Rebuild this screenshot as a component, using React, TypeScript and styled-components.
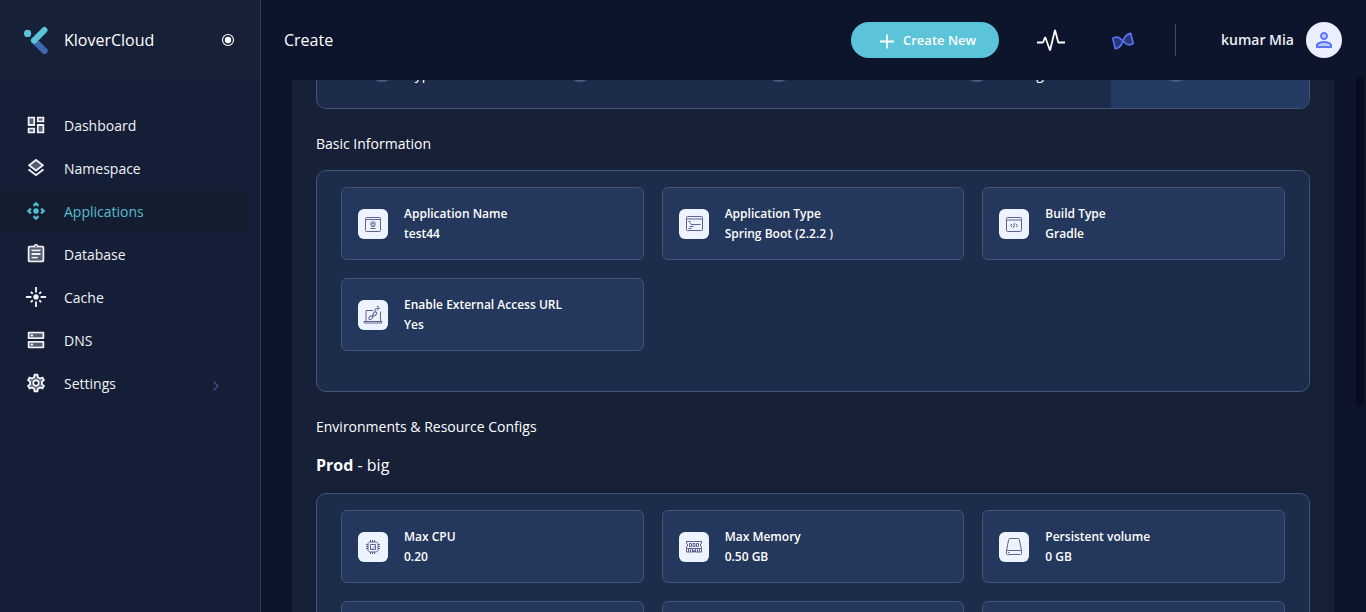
import React, { useLayoutEffect, useRef } from "react";
import styled, { createGlobalStyle } from "styled-components";
import { MdOutlineSettings, MdSettings } from "react-icons/md";
import { ChevronRight } from "lucide-react";

const GlobalStyle = createGlobalStyle`
  *, *::before, *::after { box-sizing: border-box; }
  body {
    margin: 0;
    background: #0d152d;
    color: #fff;
    font-family: "Open Sans", "Noto Sans", sans-serif;
    font-size: 14px;
    line-height: 20px;
  }
  button { font: inherit; color: inherit; border: 0; padding: 0; background: none; cursor: pointer; }
  a { color: inherit; text-decoration: none; }
  h1, h2, h3, ul, dl, dt, dd { margin: 0; padding: 0; font-weight: 400; }
  ul { list-style: none; }
  svg { display: block; flex: none; }
`;

const Shell = styled.div`
  display: grid;
  grid-template-columns: 261px minmax(0, 1fr);
  height: 100vh;
  overflow: hidden;
`;

const Sidebar = styled.aside`
  background: #141e37;
  border-right: 1px solid #2f3950;
`;

const Brand = styled.div`
  display: flex;
  align-items: center;
  gap: 16px;
  height: 80px;
  padding: 0 24px;
  background: #162037;
`;

const BrandName = styled.span`
  flex: 1;
  font-size: 16px;
  line-height: 24px;
`;

const PinButton = styled.button`
  display: grid;
  place-items: center;
  width: 16px;
  height: 16px;
`;

const Menu = styled.ul`
  padding: 24px 12px 0 0;
`;

const MenuLink = styled.a<{ $active?: boolean }>`
  display: flex;
  align-items: center;
  gap: 17px;
  height: 43px;
  padding: 0 24px 0 25px;
  color: ${(p) => (p.$active ? "#56bccf" : "#f1f2f5")};
  background: ${(p) => (p.$active ? "#141c2f" : "transparent")};
`;

const MenuIcon = styled.svg`
  margin-bottom: 1px;
`;

const MenuText = styled.span`
  flex: 1;
`;

const MenuArrow = styled(ChevronRight)`
  margin-top: 4px;
  color: #484f7c;
`;

const Main = styled.div`
  position: relative;
  display: flex;
  flex-direction: column;
  min-width: 0;
  min-height: 0;
`;

const TopBar = styled.header`
  display: flex;
  align-items: center;
  flex: none;
  height: 80px;
  padding: 0 24px 0 23px;
`;

const PageTitle = styled.h1`
  flex: 1;
  font-size: 16px;
  line-height: 24px;
`;

const CreateButton = styled.button`
  display: flex;
  align-items: center;
  gap: 8px;
  width: 148px;
  height: 36px;
  padding-left: 28px;
  border-radius: 18px;
  background: #5bc4d8;
  font-size: 13px;
  font-weight: 600;
  white-space: nowrap;
`;

const Tools = styled.div`
  display: flex;
  gap: 36px;
  margin: 0 34px;
`;

const IconButton = styled.button`
  display: grid;
  place-items: center;
  width: 36px;
  height: 36px;
`;

const Divider = styled.span`
  width: 1px;
  height: 32px;
  margin-right: 45px;
  background: #3d4963;
`;

const UserButton = styled.button`
  display: flex;
  align-items: center;
  gap: 12px;
  font-weight: 600;
  color: #eceef4;
`;

const Avatar = styled.span`
  display: grid;
  place-items: center;
  width: 36px;
  height: 36px;
  border-radius: 50%;
  background: #ebefff;
`;

const Scroller = styled.main`
  flex: 1;
  min-height: 0;
  overflow-y: auto;
  scrollbar-width: none;
  padding: 0 32px 0 31px;
`;

const ScrollThumb = styled.span`
  position: absolute;
  top: 76px;
  right: 2px;
  width: 8px;
  height: 331px;
  border-radius: 4px;
  background: #080d1d;
`;

const Sheet = styled.div`
  padding: 24px;
  background: #162037;
`;

const Stepper = styled.ul`
  display: grid;
  grid-template-columns: repeat(5, minmax(0, 1fr));
  border: 1px solid #435379;
  border-radius: 10px;
  overflow: hidden;
  background: #1c2c4a;
`;

const Step = styled.li<{ $active?: boolean }>`
  display: flex;
  align-items: flex-end;
  gap: 12px;
  padding: 24px 0 24px 52px;
  background: ${(p) => (p.$active ? "#243b64" : "transparent")};
`;

const StepDot = styled.span`
  width: 26px;
  height: 26px;
  margin-bottom: 2px;
  border-radius: 50%;
  background: #4a5a80;
`;

const SectionTitle = styled.h2`
  margin: 23px 0 14px;
  font-size: 14px;
  line-height: 24px;
`;

const EnvTitle = styled.h3`
  margin-bottom: 16px;
  font-size: 16px;
  line-height: 24px;
`;

const Panel = styled.section`
  padding: 16px 24px 40px;
  border: 1px solid #435379;
  border-radius: 10px;
  background: #1c2c4a;
`;

const CardGrid = styled.dl`
  display: grid;
  grid-template-columns: repeat(3, minmax(0, 1fr));
  gap: 18px;
`;

const Card = styled.div`
  display: flex;
  align-items: center;
  gap: 16px;
  height: 73px;
  padding: 0 16px;
  border: 1px solid #435379;
  border-radius: 6px;
  background: #24375d;
  font-size: 12px;
`;

const Tile = styled.span`
  display: grid;
  place-items: center;
  width: 30px;
  height: 30px;
  border-radius: 6px;
  background: #edf3ff;
`;

const CardLabel = styled.dt`
  font-weight: 600;
`;

const CardValue = styled.dd`
  font-weight: 600;
`;

type GlyphProps = { children: React.ReactNode };

const MenuGlyph = ({ children }: GlyphProps) => (
  <MenuIcon width="22" height="22" viewBox="0 0 24 24" fill="currentColor" aria-hidden="true">
    {children}
  </MenuIcon>
);

const CardGlyph = ({ children }: GlyphProps) => (
  <svg
    width="20"
    height="20"
    viewBox="0 0 20 20"
    fill="none"
    stroke="#5f6292"
    strokeWidth="1"
    strokeLinejoin="round"
    aria-hidden="true"
  >
    {children}
  </svg>
);

const Logo = () => (
  <svg width="24" height="28" viewBox="0 0 24 28" aria-hidden="true">
    <path d="M12 16.5 20.500 24.700" stroke="#4167b2" strokeWidth="6.400" strokeLinecap="round" />
    <path d="M10 14.500 20.400 4.100" stroke="#5bc4d8" strokeWidth="6.200" strokeLinecap="round" />
    <circle cx="3.600" cy="7.400" r="3.600" fill="#5bc4d8" />
  </svg>
);

const menu = [
  {
    label: "Dashboard",
    icon: (
      <MenuGlyph>
        <path d="M5 5h4v6H5zm10 8h4v6h-4zM5 17h4v2H5zM15 5h4v2h-4z" opacity=".3" />
        <path d="M3 13h8V3H3v10zm2-8h4v6H5V5zm8 16h8V11h-8v10zm2-8h4v6h-4v-6zM13 3v6h8V3h-8zm6 4h-4V5h4v2zM3 21h8v-6H3v6zm2-4h4v2H5v-2z" />
      </MenuGlyph>
    ),
  },
  {
    label: "Namespace",
    icon: (
      <MenuGlyph>
        <path d="M6.26 9L12 13.47 17.74 9 12 4.53z" opacity=".3" />
        <path d="M19.37 12.8l-7.38 5.74-7.37-5.73L3 14.07l9 7 9-7zM12 2L3 9l1.63 1.27L12 16l7.36-5.73L21 9l-9-7zm0 11.47L6.26 9 12 4.53 17.74 9 12 13.47z" />
      </MenuGlyph>
    ),
  },
  {
    label: "Applications",
    active: true,
    icon: (
      <MenuGlyph>
        <path d="M15.54 5.54L13.77 7.3 12 5.54 10.23 7.3 8.46 5.54 12 2zm2.92 10l-1.76-1.77L18.46 12l-1.76-1.77 1.76-1.77L22 12zm-10 2.92l1.77-1.76L12 18.46l1.77-1.76 1.77 1.76L12 22zm-2.92-10l1.76 1.77L5.54 12l1.76 1.77-1.76 1.77L2 12z" />
        <circle cx="12" cy="12" r="3" />
      </MenuGlyph>
    ),
  },
  {
    label: "Database",
    icon: (
      <MenuGlyph>
        <path d="M5 5v14h14V5H5zm9 12H7v-2h7v2zm3-4H7v-2h10v2zm0-4H7V7h10v2z" opacity=".3" />
        <path d="M7 15h7v2H7zm0-4h10v2H7zm0-4h10v2H7z" />
        <path d="M19 3h-4.18C14.4 1.84 13.3 1 12 1s-2.4.84-2.82 2H5c-1.1 0-2 .9-2 2v14c0 1.1.9 2 2 2h14c1.1 0 2-.9 2-2V5c0-1.1-.9-2-2-2zm-7-.25c.41 0 .75.34.75.75s-.34.75-.75.75-.75-.34-.75-.75.34-.75.75-.75zM19 19H5V5h14v14z" />
      </MenuGlyph>
    ),
  },
  {
    label: "Cache",
    icon: (
      <MenuGlyph>
        <path d="M7 11H1v2h6v-2zm2.17-3.24L7.05 5.64 5.64 7.05l2.12 2.12 1.41-1.41zM13 1h-2v6h2V1zm5.36 6.05l-1.41-1.41-2.12 2.12 1.41 1.41 2.12-2.12zM17 11v2h6v-2h-6zm-5-2c-1.66 0-3 1.34-3 3s1.34 3 3 3 3-1.34 3-3-1.34-3-3-3zm2.83 7.24l2.12 2.12 1.41-1.41-2.12-2.12-1.41 1.41zm-9.19.71l1.41 1.41 2.12-2.12-1.41-1.41-2.12 2.12zM11 23h2v-6h-2v6z" />
      </MenuGlyph>
    ),
  },
  {
    label: "DNS",
    icon: (
      <MenuGlyph>
        <path d="M5 5h14v4H5zM5 15h14v4H5z" opacity=".3" />
        <path d="M20 13H4c-.55 0-1 .45-1 1v6c0 .55.45 1 1 1h16c.55 0 1-.45 1-1v-6c0-.55-.45-1-1-1zm-1 6H5v-4h14v4zM20 3H4c-.55 0-1 .45-1 1v6c0 .55.45 1 1 1h16c.55 0 1-.45 1-1V4c0-.55-.45-1-1-1zm-1 6H5V5h14v4z" />
        <circle cx="7.500" cy="7" r="1.300" />
        <circle cx="7.500" cy="17" r="1.300" />
      </MenuGlyph>
    ),
  },
  {
    label: "Settings",
    expandable: true,
    icon: (
      <MenuGlyph>
        <MdSettings size={24} opacity={0.3} />
        <MdOutlineSettings size={24} />
      </MenuGlyph>
    ),
  },
];

const steps = ["Type", "Source", "Build", "Config", "Review"];

type Info = { label: string; value: string; icon: React.ReactNode };

const chip = (
  <CardGlyph>
    <path d="M6.5 5h7L15 6.500v7L13.500 15h-7L5 13.500v-7z" />
    <path d="M7.500 7.500h5v5h-5zM9.500 11.500l2-2" />
    <path d="M7.500 3v2M9.500 3v2M11.500 3v2M7.500 15v2M9.500 15v2M11.500 15v2M3 7.500h2M3 9.500h2M3 11.500h2M15 7.500h2M15 9.500h2M15 11.500h2" />
  </CardGlyph>
);

const memory = (
  <CardGlyph>
    <path d="M2 4.500h16M2.500 4.500v2l1 .5v2l-1 .5v2h15v-2l-1-.5v-2l1-.5v-2" />
    <path d="M5.500 6.500h2v3h-2zM9 6.500h2v3H9zM12.500 6.500h2v3h-2z" />
    <path d="M2.500 11.500v3.500h7v-1.500h1V15h7v-3.500M4.500 12v3M6.500 12v3M8.500 12v3M11.500 12v3M13.500 12v3M15.500 12v3" />
  </CardGlyph>
);

const volume = (
  <CardGlyph>
    <path d="M6 1.500h8q1 0 1.300 1l2.200 11v3q0 1-1 1h-13q-1 0-1-1v-3l2.200-11q.3-1 1.300-1z" />
    <path d="M2.800 13.500h14.400M4 15.500h1.500" />
  </CardGlyph>
);

const basicInfo: Info[] = [
  {
    label: "Application Name",
    value: "test44",
    icon: (
      <CardGlyph>
        <rect x="2.500" y="3.500" width="15" height="14" rx="1" />
        <path d="M2.500 5.500h15" />
        <circle cx="10" cy="10" r="2.300" />
        <path d="M9 10.500 10 9l1 1.500M8.500 12.500h3M7.500 14.500h5" />
      </CardGlyph>
    ),
  },
  {
    label: "Application Type",
    value: "Spring Boot (2.2.2 )",
    icon: (
      <CardGlyph>
        <rect x="2.500" y="2.500" width="16" height="14" rx="1" />
        <path d="M2.500 5h16M4.500 7.500h2M5.500 8.500l2 2h9M7 10.500h3M5.500 12.500h4M4.500 14.500h3" />
      </CardGlyph>
    ),
  },
  {
    label: "Build Type",
    value: "Gradle",
    icon: (
      <CardGlyph>
        <rect x="2.500" y="3.500" width="15" height="14" rx="1" />
        <path d="M2.500 6h15M8 10l-1.500 1.500L8 13M12 10l1.500 1.500L12 13M10.500 9l-1 5" />
      </CardGlyph>
    ),
  },
  {
    label: "Enable External Access URL",
    value: "Yes",
    icon: (
      <CardGlyph>
        <path d="M10 5.500H3v11h14.500v-10" />
        <path d="M1 16.500h18l-.5 1.500h-17z" />
        <ellipse cx="7.800" cy="12.700" rx="2.300" ry="1.500" transform="rotate(-45 7.800 12.700)" />
        <ellipse cx="11.800" cy="8.900" rx="2.300" ry="1.500" transform="rotate(-45 11.800 8.900)" />
        <path d="M8.800 11.800l2-2M11.500 6.500q0-3.500 4-3.500M13.800 1l2.700 2-2.200 2.500" />
      </CardGlyph>
    ),
  },
];

const resources: Info[] = [
  { label: "Max CPU", value: "0.20", icon: chip },
  { label: "Max Memory", value: "0.50 GB", icon: memory },
  { label: "Persistent volume", value: "0 GB", icon: volume },
  { label: "Min CPU", value: "0.10", icon: chip },
  { label: "Min Memory", value: "0.25 GB", icon: memory },
  { label: "Replicas", value: "1", icon: volume },
];

const InfoCards = ({ items }: { items: Info[] }) => (
  <Panel>
    <CardGrid>
      {items.map((item) => (
        <Card key={item.label}>
          <Tile>{item.icon}</Tile>
          <div>
            <CardLabel>{item.label}</CardLabel>
            <CardValue>{item.value}</CardValue>
          </div>
        </Card>
      ))}
    </CardGrid>
  </Panel>
);

export default function App() {
  const scroller = useRef<HTMLElement>(null);

  useLayoutEffect(() => {
    if (scroller.current) scroller.current.scrollTop = 73;
  }, []);

  return (
    <>
      <GlobalStyle />
      <Shell>
        <Sidebar>
          <Brand>
            <Logo />
            <BrandName>KloverCloud</BrandName>
            <PinButton aria-label="Pin sidebar">
              <svg width="14" height="14" viewBox="0 0 14 14" aria-hidden="true">
                <circle cx="7" cy="7" r="5.500" fill="none" stroke="#fff" strokeWidth="1.100" />
                <circle cx="7" cy="7" r="3.200" fill="#fff" />
              </svg>
            </PinButton>
          </Brand>
          <nav>
            <Menu>
              {menu.map((item) => (
                <li key={item.label}>
                  <MenuLink href="#" $active={item.active}>
                    {item.icon}
                    <MenuText>{item.label}</MenuText>
                    {item.expandable && <MenuArrow size={16} />}
                  </MenuLink>
                </li>
              ))}
            </Menu>
          </nav>
        </Sidebar>
        <Main>
          <TopBar>
            <PageTitle>Create</PageTitle>
            <CreateButton>
              <svg width="16" height="18" viewBox="0 0 16 18" stroke="#fff" strokeWidth="1.800" aria-hidden="true">
                <path d="M8 3.500v14M1 10.500h14" />
              </svg>
              Create New
            </CreateButton>
            <Tools>
              <IconButton aria-label="Activity">
                <svg width="28" height="28" viewBox="0 0 28 28" fill="none" stroke="#fff" strokeWidth="1.800" aria-hidden="true">
                  <path d="M0 16.500h6L8.200 11 13 24.500 18 4l3.300 12.500H28" strokeLinejoin="bevel" />
                </svg>
              </IconButton>
              <IconButton aria-label="Integrations">
                <svg width="24" height="24" viewBox="0 0 24 24" fill="#5b76fb" fillOpacity=".35" stroke="#586ff0" strokeWidth="1.700" strokeLinejoin="round" aria-hidden="true">
                  <path d="M1.800 10.500Q6 8 9 10.300L12 13 10.500 16.500Q8.500 20 4.300 20.700z" />
                  <path d="M22.200 15.500Q18 18 15 15.700L12 13 13.500 9.500Q15.500 6 19.700 5.300z" />
                </svg>
              </IconButton>
            </Tools>
            <Divider />
            <UserButton>
              kumar Mia
              <Avatar>
                <svg width="24" height="24" viewBox="0 0 24 24" fill="#5b76fb" aria-hidden="true">
                  <path d="M12 14c-4.420 0-8 1.790-8 4v2h16v-2c0-2.210-3.580-4-8-4z" opacity=".3" />
                  <path d="M12 13c-2.670 0-8 1.340-8 4v3h16v-3c0-2.660-5.330-4-8-4zm6 5H6v-.99c.2-.72 3.300-2.010 6-2.010s5.800 1.290 6 2v1z" />
                  <circle cx="12" cy="8" r="2" opacity=".3" />
                  <path d="M12 12c2.210 0 4-1.790 4-4s-1.790-4-4-4-4 1.790-4 4 1.790 4 4 4zm0-6c1.100 0 2 .9 2 2s-.9 2-2 2-2-.9-2-2 .9-2 2-2z" />
                </svg>
              </Avatar>
            </UserButton>
          </TopBar>
          <Scroller ref={scroller}>
            <Sheet>
              <Stepper>
                {steps.map((name, index) => (
                  <Step key={name} $active={index === steps.length - 1}>
                    <StepDot />
                    {name}
                  </Step>
                ))}
              </Stepper>
              <SectionTitle>Basic Information</SectionTitle>
              <InfoCards items={basicInfo} />
              <SectionTitle>Environments &amp; Resource Configs</SectionTitle>
              <EnvTitle>
                <b>Prod</b> - big
              </EnvTitle>
              <InfoCards items={resources} />
            </Sheet>
          </Scroller>
          <ScrollThumb />
        </Main>
      </Shell>
    </>
  );
}
